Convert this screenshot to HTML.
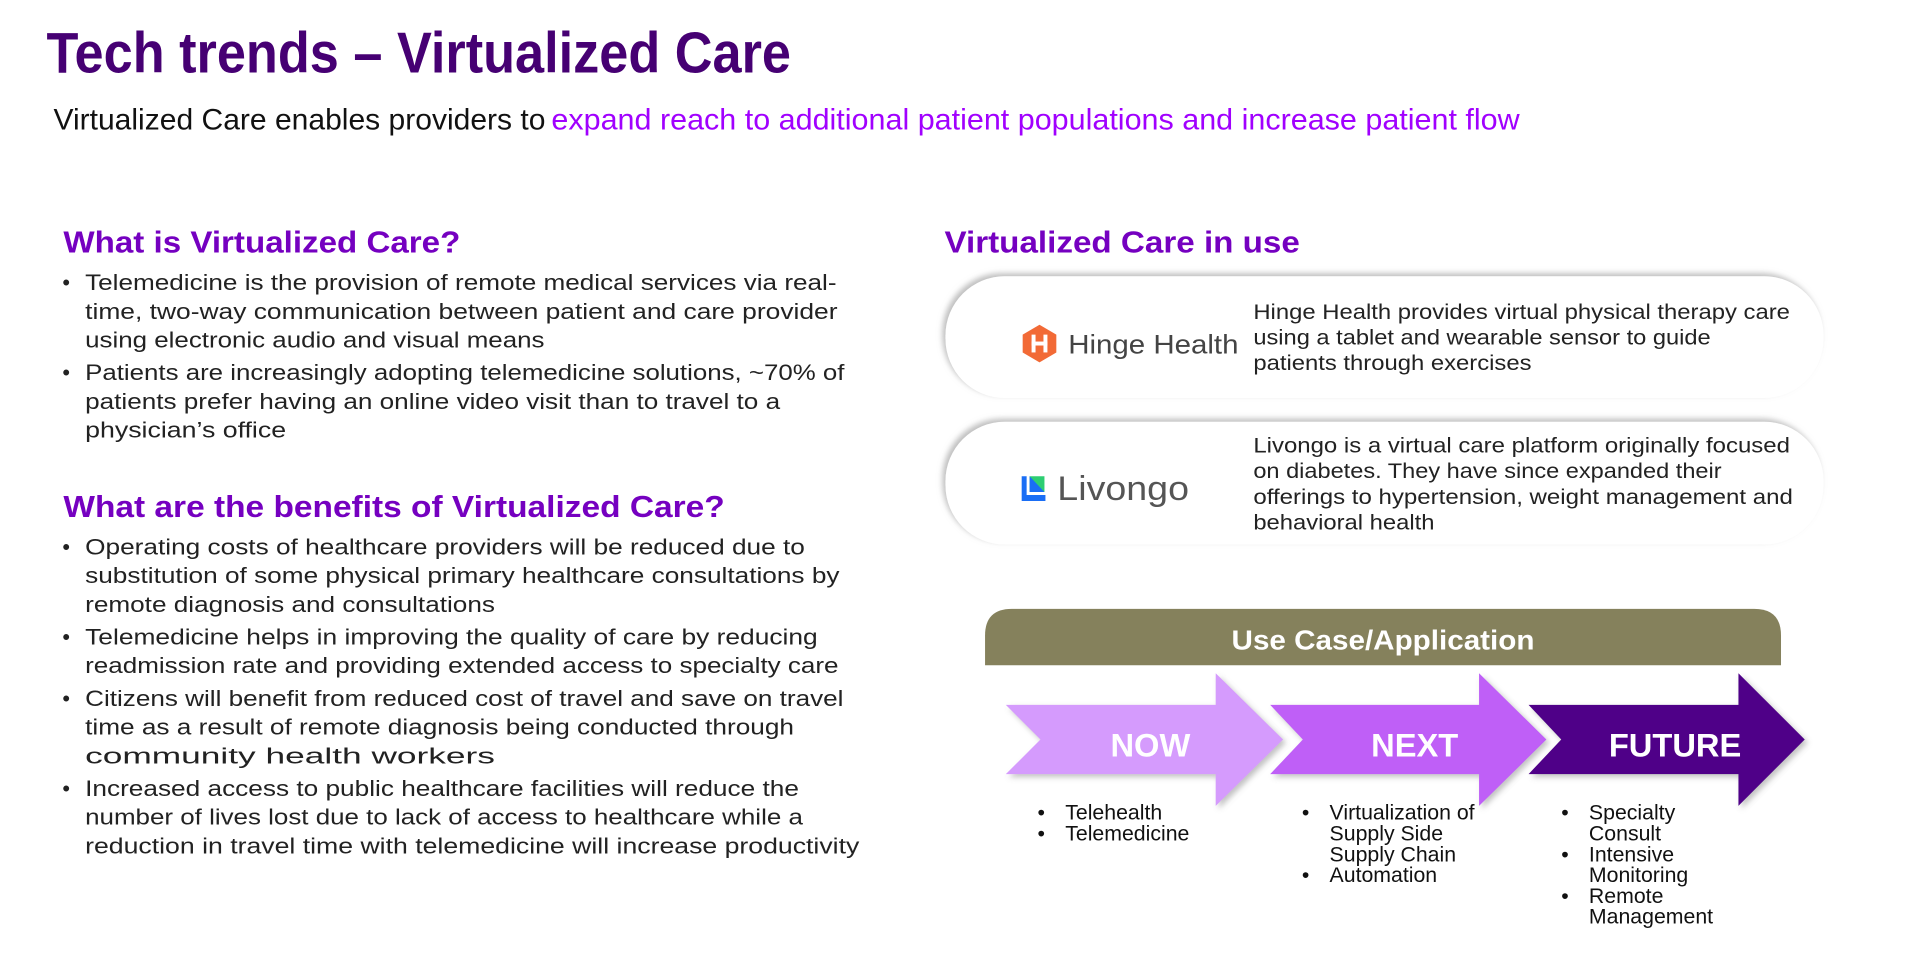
<!DOCTYPE html>
<html><head><meta charset="utf-8"><style>
html,body{margin:0;padding:0;background:#fff;}
svg{display:block;font-family:"Liberation Sans",sans-serif;}
</style></head><body>
<svg width="1906" height="978" viewBox="0 0 1906 978" xmlns="http://www.w3.org/2000/svg">
<defs>
<filter id="cs" x="-5%" y="-20%" width="110%" height="140%"><feDropShadow dx="-3" dy="-3" stdDeviation="3" flood-color="#888" flood-opacity="0.55"/></filter>
<filter id="as" x="-10%" y="-20%" width="120%" height="140%"><feDropShadow dx="3" dy="3" stdDeviation="3" flood-color="#777" flood-opacity="0.45"/></filter>
</defs>
<rect width="1906" height="978" fill="#fff"/>
<g transform="scale(0.99)">
<text x="47" y="73" font-size="58" font-weight="bold" fill="#460073" textLength="752" lengthAdjust="spacingAndGlyphs">Tech trends – Virtualized Care</text>
<text x="54" y="131" font-size="30" fill="#111" textLength="497" lengthAdjust="spacingAndGlyphs">Virtualized Care enables providers to</text>
<text x="557" y="131" font-size="30" fill="#a100ff" textLength="978" lengthAdjust="spacingAndGlyphs">expand reach to additional patient populations and increase patient flow</text>

<text x="64" y="255" font-size="31" font-weight="bold" fill="#7500c0" textLength="401" lengthAdjust="spacingAndGlyphs">What is Virtualized Care?</text>
<g font-size="22" fill="#222">
<text x="63" y="293">•</text>
<text x="86" y="293" textLength="759" lengthAdjust="spacingAndGlyphs">Telemedicine is the provision of remote medical services via real-</text>
<text x="86" y="322" textLength="760" lengthAdjust="spacingAndGlyphs">time, two-way communication between patient and care provider</text>
<text x="86" y="351" textLength="464" lengthAdjust="spacingAndGlyphs">using electronic audio and visual means</text>
<text x="63" y="384">•</text>
<text x="86" y="384" textLength="767" lengthAdjust="spacingAndGlyphs">Patients are increasingly adopting telemedicine solutions, ~70% of</text>
<text x="86" y="413" textLength="702" lengthAdjust="spacingAndGlyphs">patients prefer having an online video visit than to travel to a</text>
<text x="86" y="442" textLength="203" lengthAdjust="spacingAndGlyphs">physician’s office</text>
</g>

<text x="64" y="522" font-size="31" font-weight="bold" fill="#7500c0" textLength="668" lengthAdjust="spacingAndGlyphs">What are the benefits of Virtualized Care?</text>
<g font-size="22" fill="#222">
<text x="63" y="560">•</text>
<text x="86" y="560" textLength="727" lengthAdjust="spacingAndGlyphs">Operating costs of healthcare providers will be reduced due to</text>
<text x="86" y="589" textLength="762" lengthAdjust="spacingAndGlyphs">substitution of some physical primary healthcare consultations by</text>
<text x="86" y="618" textLength="414" lengthAdjust="spacingAndGlyphs">remote diagnosis and consultations</text>
<text x="63" y="651">•</text>
<text x="86" y="651" textLength="740" lengthAdjust="spacingAndGlyphs">Telemedicine helps in improving the quality of care by reducing</text>
<text x="86" y="680" textLength="761" lengthAdjust="spacingAndGlyphs">readmission rate and providing extended access to specialty care</text>
<text x="63" y="713">•</text>
<text x="86" y="713" textLength="766" lengthAdjust="spacingAndGlyphs">Citizens will benefit from reduced cost of travel and save on travel</text>
<text x="86" y="742" textLength="716" lengthAdjust="spacingAndGlyphs">time as a result of remote diagnosis being conducted through</text>
<text x="86" y="771" textLength="414" lengthAdjust="spacingAndGlyphs">community health workers</text>
<text x="63" y="804">•</text>
<text x="86" y="804" textLength="721" lengthAdjust="spacingAndGlyphs">Increased access to public healthcare facilities will reduce the</text>
<text x="86" y="833" textLength="725" lengthAdjust="spacingAndGlyphs">number of lives lost due to lack of access to healthcare while a</text>
<text x="86" y="862" textLength="782" lengthAdjust="spacingAndGlyphs">reduction in travel time with telemedicine will increase productivity</text>
</g>

<text x="954" y="255" font-size="31" font-weight="bold" fill="#7500c0" textLength="359" lengthAdjust="spacingAndGlyphs">Virtualized Care in use</text>

<rect x="955" y="279" width="887" height="123" rx="60" fill="#fff" filter="url(#cs)"/>
<rect x="955" y="426" width="887" height="124" rx="60" fill="#fff" filter="url(#cs)"/>

<polygon points="1050,328 1067,338 1067,356 1050,366 1033,356 1033,338" fill="#f26a36"/>
<rect x="1042" y="338" width="4" height="18" fill="#fff"/>
<rect x="1054" y="338" width="4" height="18" fill="#fff"/>
<rect x="1042" y="345" width="16" height="4" fill="#fff"/>
<text x="1079" y="357" font-size="27" fill="#444" textLength="172" lengthAdjust="spacingAndGlyphs">Hinge Health</text>
<g font-size="21" fill="#222">
<text x="1266" y="322" textLength="542" lengthAdjust="spacingAndGlyphs">Hinge Health provides virtual physical therapy care</text>
<text x="1266" y="348" textLength="462" lengthAdjust="spacingAndGlyphs">using a tablet and wearable sensor to guide</text>
<text x="1266" y="374" textLength="281" lengthAdjust="spacingAndGlyphs">patients through exercises</text>
</g>

<polygon points="1032,481 1037,481 1037,500 1056,500 1056,506 1032,506" fill="#1a6ef5"/>
<polygon points="1040,481 1055,481 1055,497 1040,497" fill="#2dce72"/>
<polygon points="1040,481 1055,497 1040,497" fill="#1a6ef5"/>
<text x="1068" y="505" font-size="35" fill="#555" textLength="133" lengthAdjust="spacingAndGlyphs">Livongo</text>
<g font-size="21" fill="#222">
<text x="1266" y="457" textLength="542" lengthAdjust="spacingAndGlyphs">Livongo is a virtual care platform originally focused</text>
<text x="1266" y="483" textLength="473" lengthAdjust="spacingAndGlyphs">on diabetes. They have since expanded their</text>
<text x="1266" y="509" textLength="545" lengthAdjust="spacingAndGlyphs">offerings to hypertension, weight management and</text>
<text x="1266" y="535" textLength="183" lengthAdjust="spacingAndGlyphs">behavioral health</text>
</g>

<path d="M995,672 L995,642 Q995,615 1022,615 L1772,615 Q1799,615 1799,642 L1799,672 Z" fill="#85815c"/>
<text x="1244" y="656" font-size="28" font-weight="bold" fill="#fff" textLength="306" lengthAdjust="spacingAndGlyphs">Use Case/Application</text>

<g transform="translate(6,0)">
<polygon points="1010,712 1222,712 1222,680 1290,747 1222,814 1222,782 1010,782 1045,747" fill="#d59bfd" filter="url(#as)"/>
<polygon points="1277,712 1488,712 1488,680 1556,747 1488,814 1488,782 1277,782 1310,747" fill="#bf5ff7" filter="url(#as)"/>
<polygon points="1538,712 1750,712 1750,680 1817,747 1750,814 1750,782 1538,782 1571,747" fill="#500088" filter="url(#as)"/>
<g font-size="33" font-weight="bold" fill="#fff" text-anchor="middle">
<text x="1156" y="764">NOW</text>
<text x="1423" y="764">NEXT</text>
<text x="1686" y="764">FUTURE</text>
</g>
</g>

<g font-size="21.5" fill="#111">
<text x="1048" y="828">•</text><text x="1076" y="828">Telehealth</text>
<text x="1048" y="849">•</text><text x="1076" y="849">Telemedicine</text>

<text x="1315" y="828">•</text><text x="1343" y="828">Virtualization of</text>
<text x="1343" y="849">Supply Side</text>
<text x="1343" y="870">Supply Chain</text>
<text x="1315" y="891">•</text><text x="1343" y="891">Automation</text>

<text x="1577" y="828">•</text><text x="1605" y="828">Specialty</text>
<text x="1605" y="849">Consult</text>
<text x="1577" y="870">•</text><text x="1605" y="870">Intensive</text>
<text x="1605" y="891">Monitoring</text>
<text x="1577" y="912">•</text><text x="1605" y="912">Remote</text>
<text x="1605" y="933">Management</text>
</g>
</g>
</svg>
</body></html>
